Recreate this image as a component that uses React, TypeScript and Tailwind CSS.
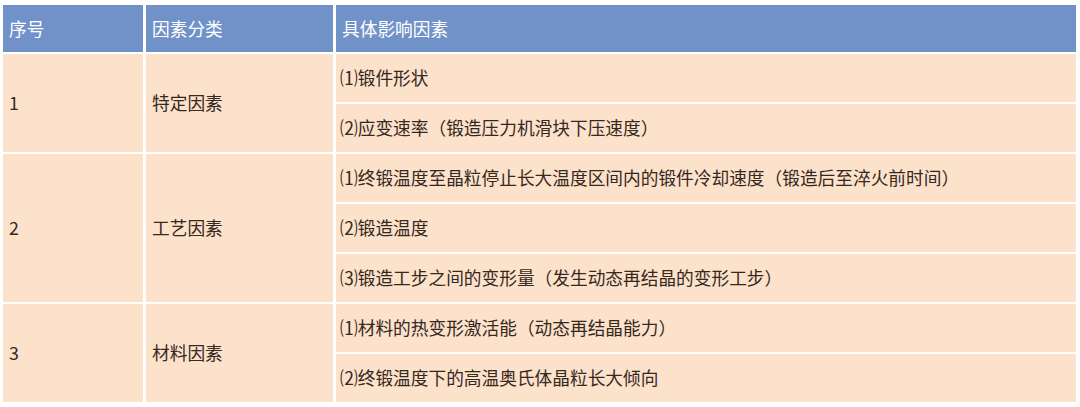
import React from "react";

const groups = [
  { n: "1", cat: "特定因素", items: ["⑴锻件形状", "⑵应变速率（锻造压力机滑块下压速度）"] },
  {
    n: "2",
    cat: "工艺因素",
    items: [
      "⑴终锻温度至晶粒停止长大温度区间内的锻件冷却速度（锻造后至淬火前时间）",
      "⑵锻造温度",
      "⑶锻造工步之间的变形量（发生动态再结晶的变形工步）",
    ],
  },
  { n: "3", cat: "材料因素", items: ["⑴材料的热变形激活能（动态再结晶能力）", "⑵终锻温度下的高温奥氏体晶粒长大倾向"] },
];

const spanCls: Record<number, string> = { 2: "row-span-2", 3: "row-span-3" };

export default function App() {
  return (
    <div
      className="w-[1080px] h-[407px] bg-white pl-[3px] pt-[5px] overflow-hidden"
      style={{ fontFamily: '"Noto Sans CJK SC", "Noto Sans", sans-serif' }}
    >
      <div className="grid grid-cols-[140px_187px_740px] grid-rows-[47px_repeat(7,48px)] gap-x-[3px] gap-y-[2px] text-[17.7px] leading-none">
        <div className="bg-[#7092c8] text-white flex items-center pl-[6px]">序号</div>
        <div className="bg-[#7092c8] text-white flex items-center pl-[6px]">因素分类</div>
        <div className="bg-[#7092c8] text-white flex items-center pl-[6px]">具体影响因素</div>
        {groups.map((g) => (
          <React.Fragment key={g.n}>
            <div className={`${spanCls[g.items.length]} bg-[#fce1cb] text-[#35281d] flex items-center pl-[6px]`}>{g.n}</div>
            <div className={`${spanCls[g.items.length]} bg-[#fce1cb] text-[#35281d] flex items-center pl-[6px]`}>{g.cat}</div>
            {g.items.map((it, i) => (
              <div key={i} className="col-start-3 bg-[#fce1cb] text-[#35281d] flex items-center pl-[4px]">
                {it}
              </div>
            ))}
          </React.Fragment>
        ))}
      </div>
    </div>
  );
}
